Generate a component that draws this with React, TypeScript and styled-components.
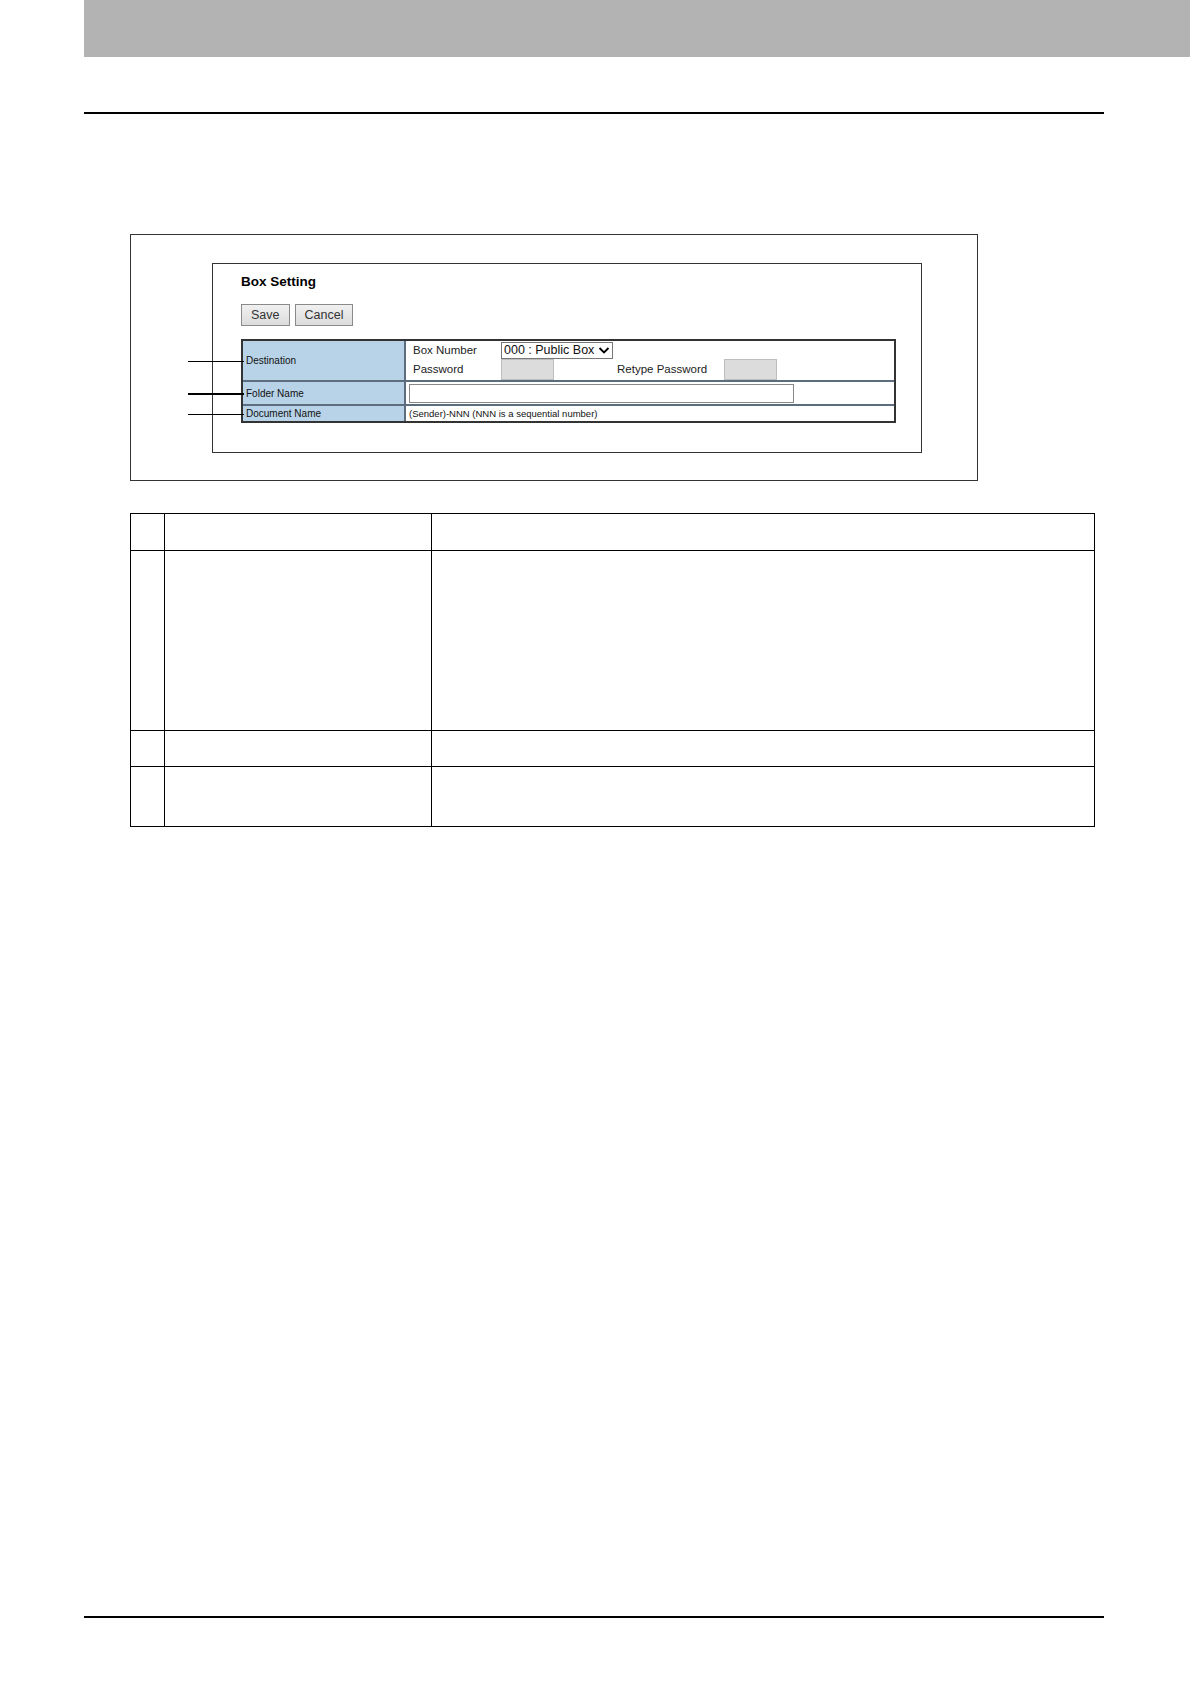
import React from 'react';
import styled, { createGlobalStyle } from 'styled-components';

const GlobalStyle = createGlobalStyle`
  html, body {
    margin: 0;
    padding: 0;
    background: #ffffff;
  }
  body {
    font-family: "Liberation Sans", Arial, sans-serif;
    color: #000;
  }
`;

const App = () => {
  return (
    <Page>
      <GlobalStyle />
      <HeaderBar />
      <Rule $top={55} />

      <Figure>
        <Screen>
          <Title>Box Setting</Title>
          <ButtonRow>
            <FormButton>Save</FormButton>
            <FormButton>Cancel</FormButton>
          </ButtonRow>

          <SettingTable>
            <SettingRow $height={41}>
              <LabelCell>Destination</LabelCell>
              <ValueCell>
                <FieldGrid>
                  <FieldText>Box Number</FieldText>
                  <SelectBox>
                    <span>000 : Public Box</span>
                    <svg width="12" height="9" viewBox="0 0 12 9">
                      <path d="M1.5 2 L6 6.5 L10.5 2" fill="none" stroke="#000" strokeWidth="1.8" />
                    </svg>
                  </SelectBox>
                  <FieldText>Password</FieldText>
                  <PasswordLine>
                    <GrayInput />
                    <FieldText>Retype Password</FieldText>
                    <GrayInput />
                  </PasswordLine>
                </FieldGrid>
              </ValueCell>
            </SettingRow>

            <SettingRow $height={24}>
              <LabelCell>Folder Name</LabelCell>
              <ValueCell>
                <TextInput />
              </ValueCell>
            </SettingRow>

            <SettingRow $height={15} $last>
              <LabelCell>Document Name</LabelCell>
              <ValueCell>
                <SmallText>(Sender)-NNN (NNN is a sequential number)</SmallText>
              </ValueCell>
            </SettingRow>
          </SettingTable>
        </Screen>
      </Figure>

      <DescTable>
        <DescRow $height={37}>
          <NumCell />
          <NameCell />
          <InfoCell />
        </DescRow>
        <DescRow $height={180}>
          <NumCell />
          <NameCell />
          <InfoCell />
        </DescRow>
        <DescRow $height={36}>
          <NumCell />
          <NameCell />
          <InfoCell />
        </DescRow>
        <DescRow $height={60}>
          <NumCell />
          <NameCell />
          <InfoCell />
        </DescRow>
      </DescTable>

      <Rule $top={789} />
    </Page>
  );
};

const Page = styled.div`
  position: relative;
  width: 1190px;
  height: 1684px;
  overflow: hidden;
  display: flex;
  flex-direction: column;
`;

const HeaderBar = styled.div`
  margin-left: 84px;
  height: 57px;
  background-color: #b3b3b3;
`;

const Rule = styled.div<{ $top: number }>`
  margin: ${(p) => p.$top}px 0 0 84px;
  width: 1020px;
  height: 2px;
  background-color: #000;
`;

const Figure = styled.div`
  margin: 120px 0 0 130px;
  width: 848px;
  height: 247px;
  border: 1px solid #333;
  padding: 28px 0 0 81px;
  box-sizing: border-box;
`;

const Screen = styled.div`
  width: 710px;
  height: 190px;
  border: 1px solid #333;
  box-sizing: border-box;
  padding: 8px 0 0 28px;
`;

const Title = styled.div`
  font-weight: bold;
  font-size: 13.5px;
  line-height: 20px;
`;

const ButtonRow = styled.div`
  display: flex;
  gap: 5px;
  margin-top: 12px;
`;

const FormButton = styled.div`
  height: 22px;
  padding: 0 9px;
  box-sizing: border-box;
  display: flex;
  align-items: center;
  font-size: 12.5px;
  color: #333;
  background: linear-gradient(#f0f0f0, #dcdcdc);
  border: 1px solid #8a8a8a;
`;

const SettingTable = styled.div`
  margin-top: 13px;
  width: 655px;
  border: 2px solid #333;
  box-sizing: border-box;
  display: flex;
  flex-direction: column;
`;

const SettingRow = styled.div<{ $height: number; $last?: boolean }>`
  display: flex;
  box-sizing: border-box;
  height: ${(p) => p.$height}px;
  border-bottom: ${(p) => (p.$last ? 'none' : '2px solid #5d6d80')};
`;

const LabelCell = styled.div`
  position: relative;
  width: 163px;
  flex: none;
  display: flex;
  align-items: center;
  padding-left: 3px;
  box-sizing: border-box;
  background-color: #b8d3e8;
  border-right: 2px solid #5d6d80;
  font-size: 10px;
  color: #111;

  &::before {
    content: '';
    position: absolute;
    left: -55px;
    top: 50%;
    width: 56px;
    height: 1.5px;
    background: #000;
  }
`;

const ValueCell = styled.div`
  flex: 1;
  display: flex;
  align-items: center;
  padding-left: 3px;
`;

const FieldGrid = styled.div`
  display: grid;
  grid-template-columns: 88px auto;
  grid-template-rows: 17px 21px;
  align-items: center;
  padding-left: 4px;
`;

const FieldText = styled.div`
  font-size: 11.5px;
  color: #222;
  white-space: nowrap;
`;

const SelectBox = styled.div`
  width: 112px;
  height: 17px;
  border: 1px solid #777;
  box-sizing: border-box;
  display: flex;
  align-items: center;
  justify-content: space-between;
  padding: 0 2px;
  font-size: 12.5px;
  color: #111;
  white-space: nowrap;
  align-self: start;
`;

const PasswordLine = styled.div`
  display: flex;
  align-items: center;
  height: 21px;

  & > div:nth-child(2) {
    margin-left: 63px;
    width: 107px;
  }
`;

const GrayInput = styled.div`
  width: 53px;
  height: 21px;
  box-sizing: border-box;
  background-color: #dcdcdc;
  border: 1px solid #bdbdbd;
`;

const TextInput = styled.div`
  width: 385px;
  height: 19px;
  box-sizing: border-box;
  border: 1px solid #888;
  background: #fff;
`;

const SmallText = styled.div`
  font-size: 9.5px;
  color: #111;
`;

const DescTable = styled.div`
  margin: 32px 0 0 130px;
  width: 964px;
  border-top: 1.5px solid #000;
  border-left: 1.5px solid #000;
  display: flex;
  flex-direction: column;
`;

const DescRow = styled.div<{ $height: number }>`
  display: flex;
  box-sizing: border-box;
  height: ${(p) => p.$height}px;
  border-bottom: 1.5px solid #000;
`;

const NumCell = styled.div`
  width: 33px;
  flex: none;
  border-right: 1.5px solid #000;
`;

const NameCell = styled.div`
  width: 266px;
  flex: none;
  border-right: 1.5px solid #000;
`;

const InfoCell = styled.div`
  flex: 1;
  border-right: 1.5px solid #000;
`;

export default App;
